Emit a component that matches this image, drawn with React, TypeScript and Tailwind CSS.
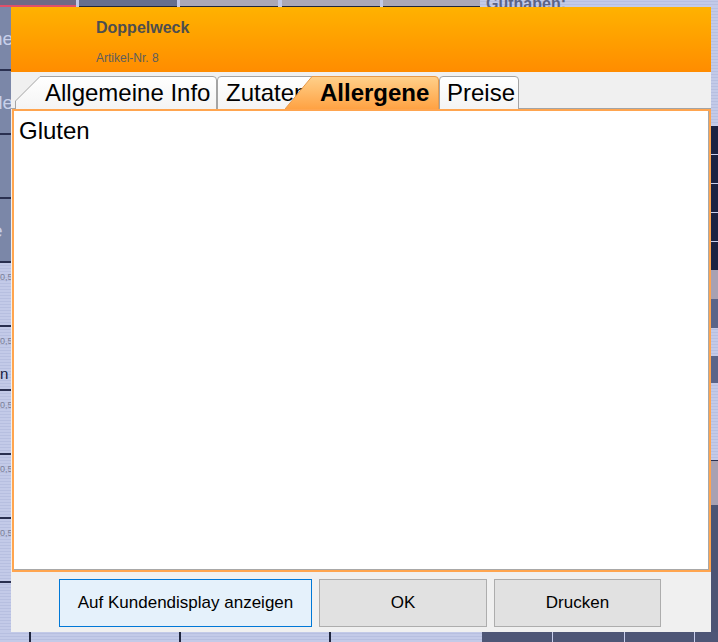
import React from "react";

const lav = "bg-[repeating-linear-gradient(0deg,#c3cae8_0px,#c3cae8_2px,#b7bfe0_2px,#b7bfe0_3px)]";

function LeftBtn({ label }: { label?: string }) {
  return (
    <div className="h-[64px] bg-[#7b87a8] border-b-2 border-[#2a3050] flex items-center overflow-hidden text-[19px] text-[#c8d0ea] leading-none">
      <span className="-ml-[8px] whitespace-nowrap">{label}</span>
    </div>
  );
}

function LeftCell({ label, big }: { label?: string; big?: string }) {
  return (
    <div className={`h-[64px] border-b-2 border-[#2a3050] overflow-hidden ${lav}`}>
      <div className="text-[9px] text-[#7a7f98] pt-[8px] whitespace-nowrap">0,5</div>
      {big && <div className="text-[15px] text-[#1a2040] mt-[14px] whitespace-nowrap">{big}</div>}
      {label}
    </div>
  );
}

function Tab({
  width,
  d,
  label,
  pl,
  active,
  className = "",
}: {
  width: number;
  d: string;
  label: string;
  pl: number;
  active?: boolean;
  className?: string;
}) {
  const id = `g-${label.replace(/\s/g, "")}`;
  return (
    <div className={`relative h-[32px] shrink-0 ${className}`} style={{ width }}>
      <svg className="absolute inset-0" width={width} height={33} viewBox={`0 0 ${width} 33`}>
        <defs>
          <linearGradient id={id} x1="0" y1="0" x2="0" y2="1">
            <stop offset="0" stopColor={active ? "#ffd08a" : "#ffffff"} />
            <stop offset="1" stopColor={active ? "#ffa243" : "#f4f4f4"} />
          </linearGradient>
        </defs>
        <path d={d} fill={`url(#${id})`} stroke={active ? "#e89a4a" : "#a4a4a4"} strokeWidth="1" />
      </svg>
      <div
        className={`relative leading-[33px] text-[24px] text-black whitespace-nowrap ${active ? "font-bold" : ""}`}
        style={{ paddingLeft: pl }}
      >
        {label}
      </div>
    </div>
  );
}

export default function App() {
  return (
    <div className="relative w-[718px] h-[642px] overflow-hidden bg-[#c2c9e7] font-['Liberation_Sans',Arial,sans-serif]">
      {/* app behind the dialog */}
      <div className="flex flex-col h-full">
        <div className="h-[7px] flex shrink-0">
          <div className="w-[76px] bg-[#6f6a86] border-b-2 border-[#e0506a]" />
          <div className="w-[3px]" />
          <div className="w-[98px] bg-[#66708e] border-b border-[#20263e]" />
          <div className="w-[3px]" />
          <div className="w-[98px] bg-[#aba8b6] border-b border-[#20263e]" />
          <div className="w-[4px]" />
          <div className="w-[98px] bg-[#aba8b6] border-b border-[#20263e]" />
          <div className="w-[3px]" />
          <div className="w-[97px] bg-[#aba8b6] border-b border-[#20263e]" />
          <div className={`flex-1 overflow-hidden ${lav}`}>
            <div className="pl-[6px] -mt-[4px] text-[16px] font-bold text-[#5c6486] leading-none">Guthaben:</div>
          </div>
        </div>
        <div className="flex-1 flex min-h-0">
          <div className="w-[11px] flex flex-col">
            <LeftBtn label="ne" />
            <LeftBtn label="de" />
            <LeftBtn />
            <LeftBtn label="e" />
            <LeftCell />
            <LeftCell big="n" />
            <LeftCell />
            <LeftCell />
            <LeftCell />
            <div className={`flex-1 ${lav}`} />
          </div>
          <div className="flex-1" />
          <div className="w-[7px] flex flex-col">
            <div className={`h-[118px] ${lav}`} />
            {[0, 1, 2, 3, 4].map((i) => (
              <div key={i} className="h-[29px] bg-[#1c2242] border-t border-[#c9cfee]" />
            ))}
            <div className="h-[29px] bg-[#a8a1b2]" />
            <div className="h-[29px] bg-[#5a6488]" />
            <div className={`h-[28px] ${lav}`} />
            <div className="h-[27px] bg-[#5a6488]" />
            <div className={`h-[78px] border-b border-[#2a3050] ${lav}`} />
            <div className="h-[44px] bg-[#a8a1b2]" />
            <div className="flex-1 bg-[#4c5474]" />
          </div>
        </div>
        <div className="h-[10px] flex shrink-0">
          <div className={`w-[482px] flex ${lav}`}>
            <div className="w-[31px] border-r-2 border-[#20263e]" />
            <div className="w-[150px] border-r-2 border-[#20263e]" />
            <div className="w-[150px] border-r-2 border-[#20263e]" />
          </div>
          <div className="flex-1 flex bg-[#4e5676]">
            <div className="w-[71px] border-r border-[#c9cfee]" />
            <div className="w-[72px] border-r border-[#c9cfee]" />
            <div className="w-[70px] border-r border-[#c9cfee]" />
          </div>
        </div>
      </div>

      {/* dialog */}
      <div className="absolute left-[11px] top-[7px] w-[700px] h-[625px] flex flex-col bg-[#f0f0f0]">
        <div className="h-[65px] shrink-0 bg-gradient-to-b from-[#ffb200] to-[#ff8c00] pl-[85px] pt-[11px]">
          <div className="text-[16px] leading-[20px] font-bold text-[#4e4e4e]">Doppelweck</div>
          <div className="text-[12px] leading-[16px] mt-[12px] text-[#5e5e5e]">Artikel-Nr. 8</div>
        </div>

        <div className="h-[37px] shrink-0 pt-[4px] pl-[4px] flex border-b border-[#a4a4a4]">
          <Tab width={202} label="Allgemeine Info" pl={30} d="M0.5 33 V25 L25 0.5 H198 Q201.5 0.5 201.5 4 V33" />
          <Tab width={100} label="Zutaten" pl={9} d="M0.5 33 V4 Q0.5 0.5 4 0.5 H99.5 V33" />
          <Tab
            width={154}
            label="Allergene"
            pl={35}
            active
            className="-ml-[32px]"
            d="M0 33 L27 0.5 H150 Q153.5 0.5 153.5 4 V33"
          />
          <Tab width={80} label="Preise" pl={8} d="M0.5 33 V4 Q0.5 0.5 4 0.5 H76 Q79.5 0.5 79.5 4 V33" />
        </div>

        <div className="flex-1 ml-[1px] border-2 border-[#ffa54f]">
          <div className="h-full bg-white border-r border-b border-[#a8a8a8] pl-[5px] pt-[6px]">
            <div className="text-[24px] leading-[28px] text-black">Gluten</div>
          </div>
        </div>

        <div className="h-[60px] shrink-0 flex justify-center gap-[7px] pt-[7px] pr-[2px]">
          <button className="w-[253px] h-[48px] border border-[#0078d7] bg-[#e5f1fb] text-[17px] text-black">
            Auf Kundendisplay anzeigen
          </button>
          <button className="w-[168px] h-[48px] border border-[#adadad] bg-[#e1e1e1] text-[17px] text-black">OK</button>
          <button className="w-[167px] h-[48px] border border-[#adadad] bg-[#e1e1e1] text-[17px] text-black">
            Drucken
          </button>
        </div>
      </div>
    </div>
  );
}
